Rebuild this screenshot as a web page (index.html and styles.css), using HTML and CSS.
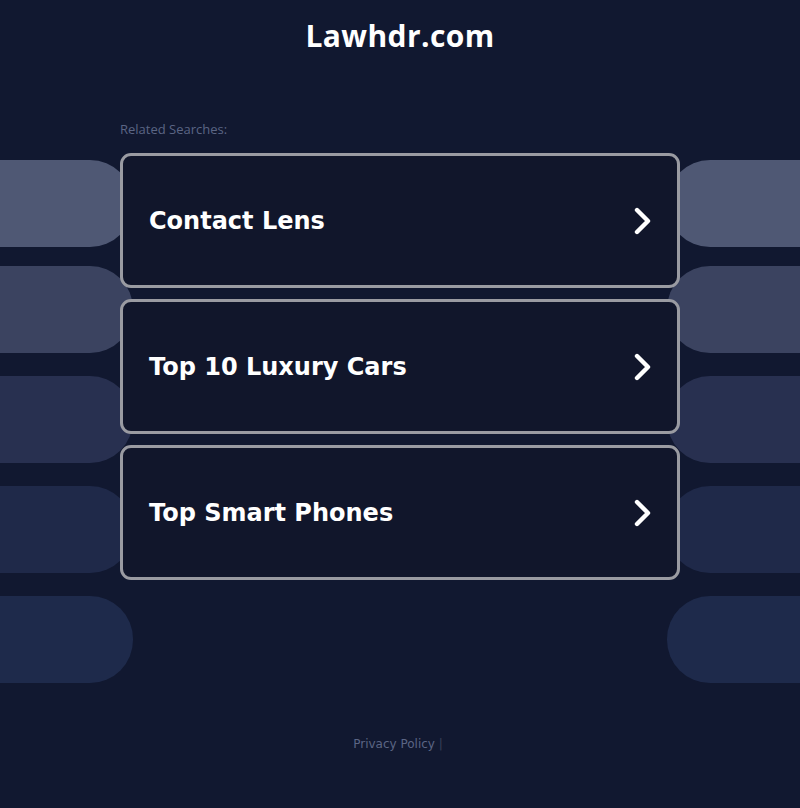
FILE: index.html
```html
<!DOCTYPE html>
<html>
<head>
<meta charset="utf-8">
<title>Lawhdr.com</title>
<link rel="stylesheet" href="styles.css">
</head>
<body>
<div class="deco" aria-hidden="true">
  <div class="side left">
    <div class="pill p1"></div>
    <div class="pill p2"></div>
    <div class="pill p3"></div>
    <div class="pill p4"></div>
    <div class="pill p5"></div>
  </div>
  <div class="side right">
    <div class="pill p1"></div>
    <div class="pill p2"></div>
    <div class="pill p3"></div>
    <div class="pill p4"></div>
    <div class="pill p5"></div>
  </div>
</div>
<header class="header">
  <h1 class="title">Lawhdr.com</h1>
</header>
<main class="main">
  <div class="label">Related Searches:</div>
  <div class="cards">
    <a class="card" href="#"><span class="card-text">Contact Lens</span><svg class="chev" width="20" height="28" viewBox="0 0 20 28"><polyline points="4,3 15,14 4,25" fill="none" stroke="#fff" stroke-width="4.4" stroke-linecap="round" stroke-linejoin="round"/></svg></a>
    <a class="card" href="#"><span class="card-text">Top 10 Luxury Cars</span><svg class="chev" width="20" height="28" viewBox="0 0 20 28"><polyline points="4,3 15,14 4,25" fill="none" stroke="#fff" stroke-width="4.4" stroke-linecap="round" stroke-linejoin="round"/></svg></a>
    <a class="card" href="#"><span class="card-text">Top Smart Phones</span><svg class="chev" width="20" height="28" viewBox="0 0 20 28"><polyline points="4,3 15,14 4,25" fill="none" stroke="#fff" stroke-width="4.4" stroke-linecap="round" stroke-linejoin="round"/></svg></a>
  </div>
</main>
<footer class="footer">
  <a class="privacy" href="#">Privacy Policy</a> <span class="sep">|</span>
</footer>
</body>
</html>
```

FILE: styles.css
```css
html, body {
  margin: 0;
  padding: 0;
}
body {
  background: #111830;
  width: 800px;
  height: 808px;
  position: relative;
  overflow: hidden;
  font-family: "DejaVu Sans", sans-serif;
}
.deco {
  position: absolute;
  left: 0;
  top: 160px;
  width: 800px;
  display: flex;
  justify-content: space-between;
  z-index: 0;
}
.side {
  display: flex;
  flex-direction: column;
  width: 133px;
}
.pill {
  height: 87px;
  margin-top: 23px;
}
.pill.p1 { margin-top: 0; background: #4f5874; }
.pill.p2 { margin-top: 19px; background: #3b4360; }
.pill.p3 { background: #283050; }
.pill.p4 { background: #1f2949; }
.pill.p5 { background: #1e2a4b; }
.left .pill { border-radius: 0 43px 43px 0; }
.right .pill { border-radius: 43px 0 0 43px; }

.header {
  position: relative;
  z-index: 1;
  padding-top: 16px;
  text-align: center;
}
.title {
  margin: 0;
  color: #ffffff;
  font-family: "Open Sans", sans-serif;
  font-weight: 700;
  font-size: 30px;
  line-height: 40px;
  letter-spacing: 0.4px;
}
.main {
  position: relative;
  z-index: 1;
  width: 560px;
  margin: 65px auto 0;
}
.label {
  color: #5b6584;
  font-family: "Open Sans", sans-serif;
  font-weight: 500;
  font-size: 13px;
  line-height: 16px;
  margin-bottom: 16px;
}
.cards {
  display: flex;
  flex-direction: column;
  gap: 11px;
}
.card {
  display: flex;
  align-items: center;
  justify-content: space-between;
  height: 129px;
  box-sizing: content-box;
  border: 3px solid #9a9ba2;
  border-radius: 11px;
  background: #11162b;
  padding: 0 24px 0 26px;
  text-decoration: none;
}
.card-text {
  color: #ffffff;
  font-family: "DejaVu Sans", sans-serif;
  font-weight: bold;
  font-size: 24px;
}
.chev {
  display: block;
}
.footer {
  position: absolute;
  left: 0;
  right: 0;
  top: 736px;
  text-align: center;
  padding-right: 4px;
  font-family: "DejaVu Sans", sans-serif;
  font-size: 12px;
  line-height: 16px;
  color: #5b6584;
  z-index: 1;
}
.privacy {
  color: #5b6584;
  text-decoration: none;
}
.sep {
  color: #3a4058;
}
```
